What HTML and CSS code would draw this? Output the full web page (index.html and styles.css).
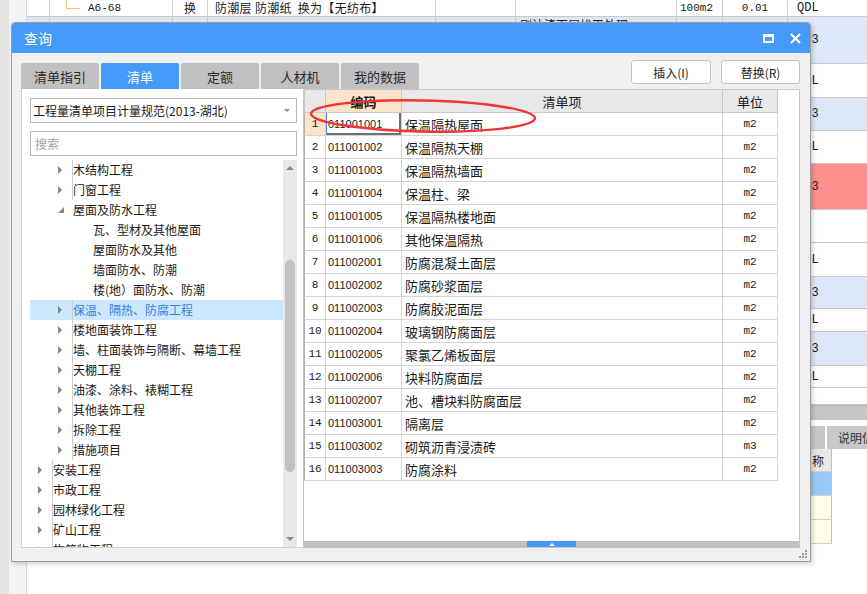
FILE: index.html
```html
<!DOCTYPE html>
<html lang="zh-CN">
<head>
<meta charset="utf-8">
<title>查询</title>
<link rel="stylesheet" href="styles.css">
</head>
<body>
<div class="app">
  <div class="strip-a"></div>
  <div class="strip-b"></div>
  <div class="main">
    <div class="row r0">
      <div class="c c1"></div>
      <div class="c c2"><span class="conn"></span><span class="mono">A6-68</span></div>
      <div class="c c3">换</div>
      <div class="c c4">防潮层 防潮纸&nbsp;&nbsp;换为【无纺布】</div>
      <div class="c c5"></div>
      <div class="c c6"></div>
      <div class="c c7 mono">100m2</div>
      <div class="c c8 mono">0.01</div>
      <div class="c c9 mono">QDL</div>
    </div>
    <div class="row r1 blue">
      <div class="c c1"></div><div class="c c2"></div><div class="c c3"></div><div class="c c4"></div><div class="c c5"></div>
      <div class="c c6 peek">刷油漆面层找平处理</div>
      <div class="c c7"></div><div class="c c8"></div><div class="c c9 mono">ZD3</div>
    </div>
    <div class="row r2">
      <div class="c c1"></div><div class="c c2"></div><div class="c c3"></div><div class="c c4"></div><div class="c c5"></div><div class="c c6"></div><div class="c c7"></div><div class="c c8"></div><div class="c c9 mono">QDL</div>
    </div>
    <div class="row r3 blue">
      <div class="c c1"></div><div class="c c2"></div><div class="c c3"></div><div class="c c4"></div><div class="c c5"></div><div class="c c6"></div><div class="c c7"></div><div class="c c8"></div><div class="c c9 mono">ZD3</div>
    </div>
    <div class="row r4">
      <div class="c c1"></div><div class="c c2"></div><div class="c c3"></div><div class="c c4"></div><div class="c c5"></div><div class="c c6"></div><div class="c c7"></div><div class="c c8"></div><div class="c c9 mono">QDL</div>
    </div>
    <div class="row r5 red">
      <div class="c c1"></div><div class="c c2"></div><div class="c c3"></div><div class="c c4"></div><div class="c c5"></div><div class="c c6"></div><div class="c c7"></div><div class="c c8"></div><div class="c c9 mono">ZD3</div>
    </div>
    <div class="row r6">
      <div class="c c1"></div><div class="c c2"></div><div class="c c3"></div><div class="c c4"></div><div class="c c5"></div><div class="c c6"></div><div class="c c7"></div><div class="c c8"></div><div class="c c9"></div>
    </div>
    <div class="row r7">
      <div class="c c1"></div><div class="c c2"></div><div class="c c3"></div><div class="c c4"></div><div class="c c5"></div><div class="c c6"></div><div class="c c7"></div><div class="c c8"></div><div class="c c9 mono">QDL</div>
    </div>
    <div class="row r8 blue">
      <div class="c c1"></div><div class="c c2"></div><div class="c c3"></div><div class="c c4"></div><div class="c c5"></div><div class="c c6"></div><div class="c c7"></div><div class="c c8"></div><div class="c c9 mono">ZD3</div>
    </div>
    <div class="row r9">
      <div class="c c1"></div><div class="c c2"></div><div class="c c3"></div><div class="c c4"></div><div class="c c5"></div><div class="c c6"></div><div class="c c7"></div><div class="c c8"></div><div class="c c9 mono">QDL</div>
    </div>
    <div class="row r10 blue">
      <div class="c c1"></div><div class="c c2"></div><div class="c c3"></div><div class="c c4"></div><div class="c c5"></div><div class="c c6"></div><div class="c c7"></div><div class="c c8"></div><div class="c c9 mono">ZD3</div>
    </div>
    <div class="row r11">
      <div class="c c1"></div><div class="c c2"></div><div class="c c3"></div><div class="c c4"></div><div class="c c5"></div><div class="c c6"></div><div class="c c7"></div><div class="c c8"></div><div class="c c9 mono">QDL</div>
    </div>
    <div class="row r12">
      <div class="c c1"></div><div class="c c2"></div><div class="c c3"></div><div class="c c4"></div><div class="c c5"></div><div class="c c6"></div><div class="c c7"></div><div class="c c8"></div><div class="c c9"></div>
    </div>
    <div class="bscroll"></div>
    <div class="bgap"></div>
    <div class="btabs">
      <span class="btab"></span>
      <span class="btab"></span>
      <span class="btab"></span>
      <span class="btab"></span>
      <span class="btab"></span>
      <span class="btab"></span>
      <span class="btab"></span>
      <span class="btab"></span>
      <span class="btab">说明信息</span>
    </div>
    <div class="lower">
      <div class="lt-row lt-head"><div class="lt-a"></div><div class="lt-b">名称</div></div>
      <div class="lt-row lt-sel"><div class="lt-a"></div><div class="lt-b"></div></div>
      <div class="lt-row lt-y"><div class="lt-a"></div><div class="lt-b"></div></div>
      <div class="lt-row lt-y"><div class="lt-a"></div><div class="lt-b"></div></div>
    </div>
  </div>

  <div class="dialog">
    <div class="titlebar">
      <span class="title">查询</span>
      <svg class="tb-max" width="11" height="9" viewBox="0 0 11 9"><path d="M0 0h11v9H0z M2 3v4h7V3z" fill="#fff" fill-rule="evenodd"/></svg>
      <svg class="tb-close" width="11" height="11" viewBox="0 0 11 11"><path d="M1 1L10 10M10 1L1 10" stroke="#fff" stroke-width="2.2" fill="none"/></svg>
    </div>
    <div class="dbody">
      <div class="toolbar">
        <div class="tabs">
          <span class="tab">清单指引</span>
          <span class="tab on">清单</span>
          <span class="tab">定额</span>
          <span class="tab">人材机</span>
          <span class="tab">我的数据</span>
        </div>
        <div class="actions">
          <span class="btn">插入(I)</span>
          <span class="btn b2">替换(R)</span>
        </div>
      </div>
      <div class="content">
        <div class="left">
          <div class="select"><span>工程量清单项目计量规范(2013-湖北)</span><span class="caret"></span></div>
          <div class="search">搜索</div>
          <div class="tree">
            <ul class="tree-list">
              <li class="l1"><span class="tw c"></span><span class="tx">木结构工程</span></li>
              <li class="l1"><span class="tw c"></span><span class="tx">门窗工程</span></li>
              <li class="l1"><span class="tw o"></span><span class="tx">屋面及防水工程</span></li>
              <li class="l2"><span class="tw"></span><span class="tx">瓦、型材及其他屋面</span></li>
              <li class="l2"><span class="tw"></span><span class="tx">屋面防水及其他</span></li>
              <li class="l2"><span class="tw"></span><span class="tx">墙面防水、防潮</span></li>
              <li class="l2"><span class="tw"></span><span class="tx">楼(地）面防水、防潮</span></li>
              <li class="l1 sel"><span class="tw c"></span><span class="tx">保温、隔热、防腐工程</span></li>
              <li class="l1"><span class="tw c"></span><span class="tx">楼地面装饰工程</span></li>
              <li class="l1"><span class="tw c"></span><span class="tx">墙、柱面装饰与隔断、幕墙工程</span></li>
              <li class="l1"><span class="tw c"></span><span class="tx">天棚工程</span></li>
              <li class="l1"><span class="tw c"></span><span class="tx">油漆、涂料、裱糊工程</span></li>
              <li class="l1"><span class="tw c"></span><span class="tx">其他装饰工程</span></li>
              <li class="l1"><span class="tw c"></span><span class="tx">拆除工程</span></li>
              <li class="l1"><span class="tw c"></span><span class="tx">措施项目</span></li>
              <li class="l0"><span class="tw c"></span><span class="tx">安装工程</span></li>
              <li class="l0"><span class="tw c"></span><span class="tx">市政工程</span></li>
              <li class="l0"><span class="tw c"></span><span class="tx">园林绿化工程</span></li>
              <li class="l0"><span class="tw c"></span><span class="tx">矿山工程</span></li>
              <li class="l0"><span class="tw c"></span><span class="tx">构筑物工程</span></li>
            </ul>
            <div class="vscroll">
              <span class="vs-btn vs-up"></span>
              <div class="vs-track"><div class="vs-thumb"></div></div>
              <span class="vs-btn vs-down"></span>
            </div>
          </div>
        </div>
        <div class="right">
          <div class="grid">
            <div class="gr head"><div class="g n"></div><div class="g code hl">编码</div><div class="g name ctr">清单项</div><div class="g unit">单位</div></div>
            <div class="gr cur"><div class="g n">1</div><div class="g code focus">011001001</div><div class="g name">保温隔热屋面</div><div class="g unit">m2</div></div>
            <div class="gr"><div class="g n">2</div><div class="g code">011001002</div><div class="g name">保温隔热天棚</div><div class="g unit">m2</div></div>
            <div class="gr"><div class="g n">3</div><div class="g code">011001003</div><div class="g name">保温隔热墙面</div><div class="g unit">m2</div></div>
            <div class="gr"><div class="g n">4</div><div class="g code">011001004</div><div class="g name">保温柱、梁</div><div class="g unit">m2</div></div>
            <div class="gr"><div class="g n">5</div><div class="g code">011001005</div><div class="g name">保温隔热楼地面</div><div class="g unit">m2</div></div>
            <div class="gr"><div class="g n">6</div><div class="g code">011001006</div><div class="g name">其他保温隔热</div><div class="g unit">m2</div></div>
            <div class="gr"><div class="g n">7</div><div class="g code">011002001</div><div class="g name">防腐混凝土面层</div><div class="g unit">m2</div></div>
            <div class="gr"><div class="g n">8</div><div class="g code">011002002</div><div class="g name">防腐砂浆面层</div><div class="g unit">m2</div></div>
            <div class="gr"><div class="g n">9</div><div class="g code">011002003</div><div class="g name">防腐胶泥面层</div><div class="g unit">m2</div></div>
            <div class="gr"><div class="g n">10</div><div class="g code">011002004</div><div class="g name">玻璃钢防腐面层</div><div class="g unit">m2</div></div>
            <div class="gr"><div class="g n">11</div><div class="g code">011002005</div><div class="g name">聚氯乙烯板面层</div><div class="g unit">m2</div></div>
            <div class="gr"><div class="g n">12</div><div class="g code">011002006</div><div class="g name">块料防腐面层</div><div class="g unit">m2</div></div>
            <div class="gr"><div class="g n">13</div><div class="g code">011002007</div><div class="g name">池、槽块料防腐面层</div><div class="g unit">m2</div></div>
            <div class="gr"><div class="g n">14</div><div class="g code">011003001</div><div class="g name">隔离层</div><div class="g unit">m2</div></div>
            <div class="gr"><div class="g n">15</div><div class="g code">011003002</div><div class="g name">砌筑沥青浸渍砖</div><div class="g unit">m3</div></div>
            <div class="gr"><div class="g n">16</div><div class="g code">011003003</div><div class="g name">防腐涂料</div><div class="g unit">m2</div></div>
          </div>
          <div class="hscroll"><span class="hs-thumb"></span></div>
        </div>
      </div>
    </div>
    <div class="dfoot">
      <svg width="9" height="9" viewBox="0 0 9 9"><g fill="#9a9a9a"><rect x="6" y="0" width="2" height="2"/><rect x="3" y="3" width="2" height="2"/><rect x="6" y="3" width="2" height="2"/><rect x="0" y="6" width="2" height="2"/><rect x="3" y="6" width="2" height="2"/><rect x="6" y="6" width="2" height="2"/></g></svg>
    </div>
  </div>

  <svg class="annot" width="240" height="42" viewBox="0 0 240 42"><ellipse cx="118" cy="20" rx="112" ry="15.5" transform="rotate(1.2 118 20)" fill="none" stroke="#ef3535" stroke-width="2.4"/></svg>
</div>
</body>
</html>
```

FILE: styles.css
```css
* { box-sizing: border-box; }
html, body { margin: 0; padding: 0; }
body {
  width: 867px;
  height: 594px;
  overflow: hidden;
  background: #fff;
  font-family: "Noto Sans CJK SC", "Microsoft YaHei", sans-serif;
  font-size: 12px;
  color: #1a1a1a;
}
.app { position: relative; display: flex; width: 867px; height: 594px; overflow: hidden; }
.strip-a { width: 9px; flex: none; background: #e3e3e3; }
.strip-b { width: 18px; flex: none; background: #f3f3f3; border-right: 1px solid #d9d9d9; }
.main { flex: 1; min-width: 0; display: flex; flex-direction: column; }
.mono { font-family: "Liberation Mono", monospace; font-size: 11px; }

/* background grid */
.row { display: flex; flex: none; border-bottom: 1px solid #c9c9c9; }
.row.blue { background: #dce8fa; }
.row.red { background: #ff8f8f; }
.r0 { height: 17px; } .r1 { height: 47px; } .r2 { height: 34px; } .r3 { height: 33px; }
.r4 { height: 33px; } .r5 { height: 46px; } .r6 { height: 33px; } .r7 { height: 34px; }
.r8 { height: 32px; } .r9 { height: 23px; } .r10 { height: 34px; } .r11 { height: 22px; }
.r12 { height: 17px; }
.c { flex: none; display: flex; align-items: center; white-space: nowrap; border-right: 1px solid #cfcfcf; line-height: 16px; }
.c1 { width: 23px; }
.c2 { width: 123px; }
.c3 { width: 35px; justify-content: center; font-size: 12px; }
.c4 { width: 228px; padding-left: 7px; font-size: 12px; letter-spacing: 0.3px; }
.c5 { width: 80px; }
.c6 { width: 161px; padding-left: 4px; overflow: hidden; }
.c6.peek { align-items: flex-start; padding-top: 0; }
.c7 { width: 46px; padding-left: 3px; }
.c8 { width: 65px; justify-content: center; }
.c9 { flex: 1; padding-left: 9px; border-right: none; }
.c9.mono { font-size: 12px; }
.conn { width: 14px; height: 9px; margin-left: 16px; margin-right: 8px; align-self: flex-start; border-left: 1px solid #f2bf86; border-bottom: 1px solid #f2bf86; }

.bscroll { height: 15px; flex: none; background: #c6c6c6; border-top: 1px solid #b8b8b8; }
.bgap { height: 6px; flex: none; }
.btabs { height: 23px; flex: none; display: flex; gap: 2px; }
.btab { width: 98px; flex: none; background: #c8c8c8; color: #333; display: flex; align-items: center; padding-left: 11px; white-space: nowrap; }
.lower { width: 805px; flex: none; }
.lt-row { display: flex; height: 24px; border-bottom: 1px solid #d0d0d0; }
.lt-head { height: 23px; background: #e8e8e8; }
.lt-sel { background: #98c9f4; }
.lt-y { background: #fffde6; }
.lt-a { width: 773px; }
.lt-b { width: 32px; border-right: 1px solid #c0c0c0; display: flex; align-items: center; }

/* dialog */
.dialog {
  position: absolute; left: 11px; top: 22px; width: 800px; height: 540px;
  border: 1px solid #9c9c9c; border-radius: 4px 4px 0 0; background: #f0f0f0;
  display: flex; flex-direction: column; overflow: hidden;
  box-shadow: 2px 2px 4px rgba(0, 0, 0, 0.18);
}
.titlebar { height: 30px; flex: none; background: #4499f9; color: #fff; display: flex; align-items: center; padding: 0 9px 0 12px; }
.title { flex: 1; font-size: 14px; }
.tb-max { margin-right: 16px; }
.dbody { flex: 1; min-height: 0; display: flex; flex-direction: column; padding: 7px 10px 0 9px; }
.toolbar { height: 29px; flex: none; display: flex; }
.tabs { display: flex; gap: 2px; align-self: flex-end; }
.tab { width: 78px; height: 26px; background: #c0c0c0; color: #2a2a2a; display: flex; align-items: center; justify-content: center; border-radius: 2px 2px 0 0; font-size: 13px; }
.tab.on { background: #4499f9; color: #fff; }
.actions { margin-left: auto; display: flex; gap: 10px; align-self: flex-start; }
.btn { width: 80px; height: 24px; background: #fff; border: 1px solid #c4c4c4; border-radius: 3px; display: flex; align-items: center; justify-content: center; color: #222; }
.btn.b2 { width: 79px; }
.content { height: 459px; flex: none; display: flex; }

.left { width: 282px; flex: none; background: #fff; border-left: 1px solid #d0d0d0; border-bottom: 1px solid #d0d0d0; padding: 9px 6px 0 8px; display: flex; flex-direction: column; }
.select { height: 25px; flex: none; border: 1px solid #b9b9b9; display: flex; align-items: center; padding-left: 2px; white-space: nowrap; }
.caret { margin-left: auto; margin-right: 6px; border-top: 3px solid #8a8a8a; border-left: 3px solid transparent; border-right: 3px solid transparent; }
.search { height: 25px; flex: none; margin-top: 8px; border: 1px solid #b9b9b9; padding-left: 4px; display: flex; align-items: center; color: #a3a3a3; }
.tree { margin-top: 4px; flex: 1; min-height: 0; display: flex; }
.tree-list { list-style: none; margin: 0; padding: 0; flex: 1; overflow: hidden; }
.tree-list li { height: 20px; display: flex; align-items: center; white-space: nowrap; line-height: 20px; }
.l0 { padding-left: 8px; }
.l1 { padding-left: 28px; }
.l2 { padding-left: 48px; }
.tw { width: 15px; height: 20px; flex: none; position: relative; }
.tw.c::before { content: ""; position: absolute; left: 0; top: 6px; width: 0; height: 0; border-left: 4px solid #858585; border-top: 4px solid transparent; border-bottom: 4px solid transparent; }
.tw.o::before { content: ""; position: absolute; left: 0; top: 7px; width: 0; height: 0; border-bottom: 6px solid #858585; border-left: 6px solid transparent; }
.tree-list li.sel { background: #cce8ff; color: #3d7de0; }
.vscroll { width: 14px; flex: none; background: #e8e8e8; display: flex; flex-direction: column; align-items: center; }
.vs-btn { height: 16px; flex: none; display: flex; align-items: center; justify-content: center; }
.vs-up::before { content: ""; border-bottom: 4px solid #8a8a8a; border-left: 4px solid transparent; border-right: 4px solid transparent; }
.vs-down::before { content: ""; border-top: 4px solid #8a8a8a; border-left: 4px solid transparent; border-right: 4px solid transparent; }
.vs-track { flex: 1; }
.vs-thumb { width: 10px; height: 212px; margin-top: 84px; background: #c2c2c2; border-radius: 5px; }

.right { flex: 1; min-width: 0; background: #fff; border: 1px solid #c6c6c6; display: flex; flex-direction: column; }
.grid { flex: 1; }
.gr { display: grid; grid-template-columns: 22px 76px 321px 55px; height: 23px; }
.g { display: flex; align-items: center; border-right: 1px solid #d4d4d4; border-bottom: 1px solid #d4d4d4; white-space: nowrap; overflow: hidden; }
.g.n { border-left: 1px solid #b0b0b0; justify-content: center; font-family: "Liberation Mono", monospace; font-size: 11px; }
.g.code { padding-left: 2px; font-family: "Liberation Sans", Arial, sans-serif; font-size: 11px; }
.g.name { padding-left: 3px; font-size: 13px; }
.g.unit { justify-content: center; font-family: "Liberation Mono", monospace; font-size: 11px; }
.head .g { background: #e8e8e8; border-color: #c8c8c8; font-family: "Noto Sans CJK SC", sans-serif; font-size: 13px; }
.head .g.code { justify-content: center; padding-left: 0; font-weight: bold; background: #fde4c8; }
.head .g.ctr { justify-content: center; padding-left: 0; }
.cur .g.n { background: #fde4c8; }
.g.focus { box-shadow: inset 1px 0 #3d8ef0, inset -2px -2px #707070; }
.hscroll { height: 6px; flex: none; background: #c0c0c0; display: flex; }
.hs-thumb { width: 49px; margin-left: 223px; background: #4499f9; display: flex; align-items: center; justify-content: center; }
.hs-thumb::before { content: ""; border-bottom: 3px solid #fff; border-left: 3px solid transparent; border-right: 3px solid transparent; }
.dfoot { height: 13px; flex: none; display: flex; justify-content: flex-end; align-items: center; padding-right: 2px; }

.annot { position: absolute; left: 305px; top: 96px; }
```
